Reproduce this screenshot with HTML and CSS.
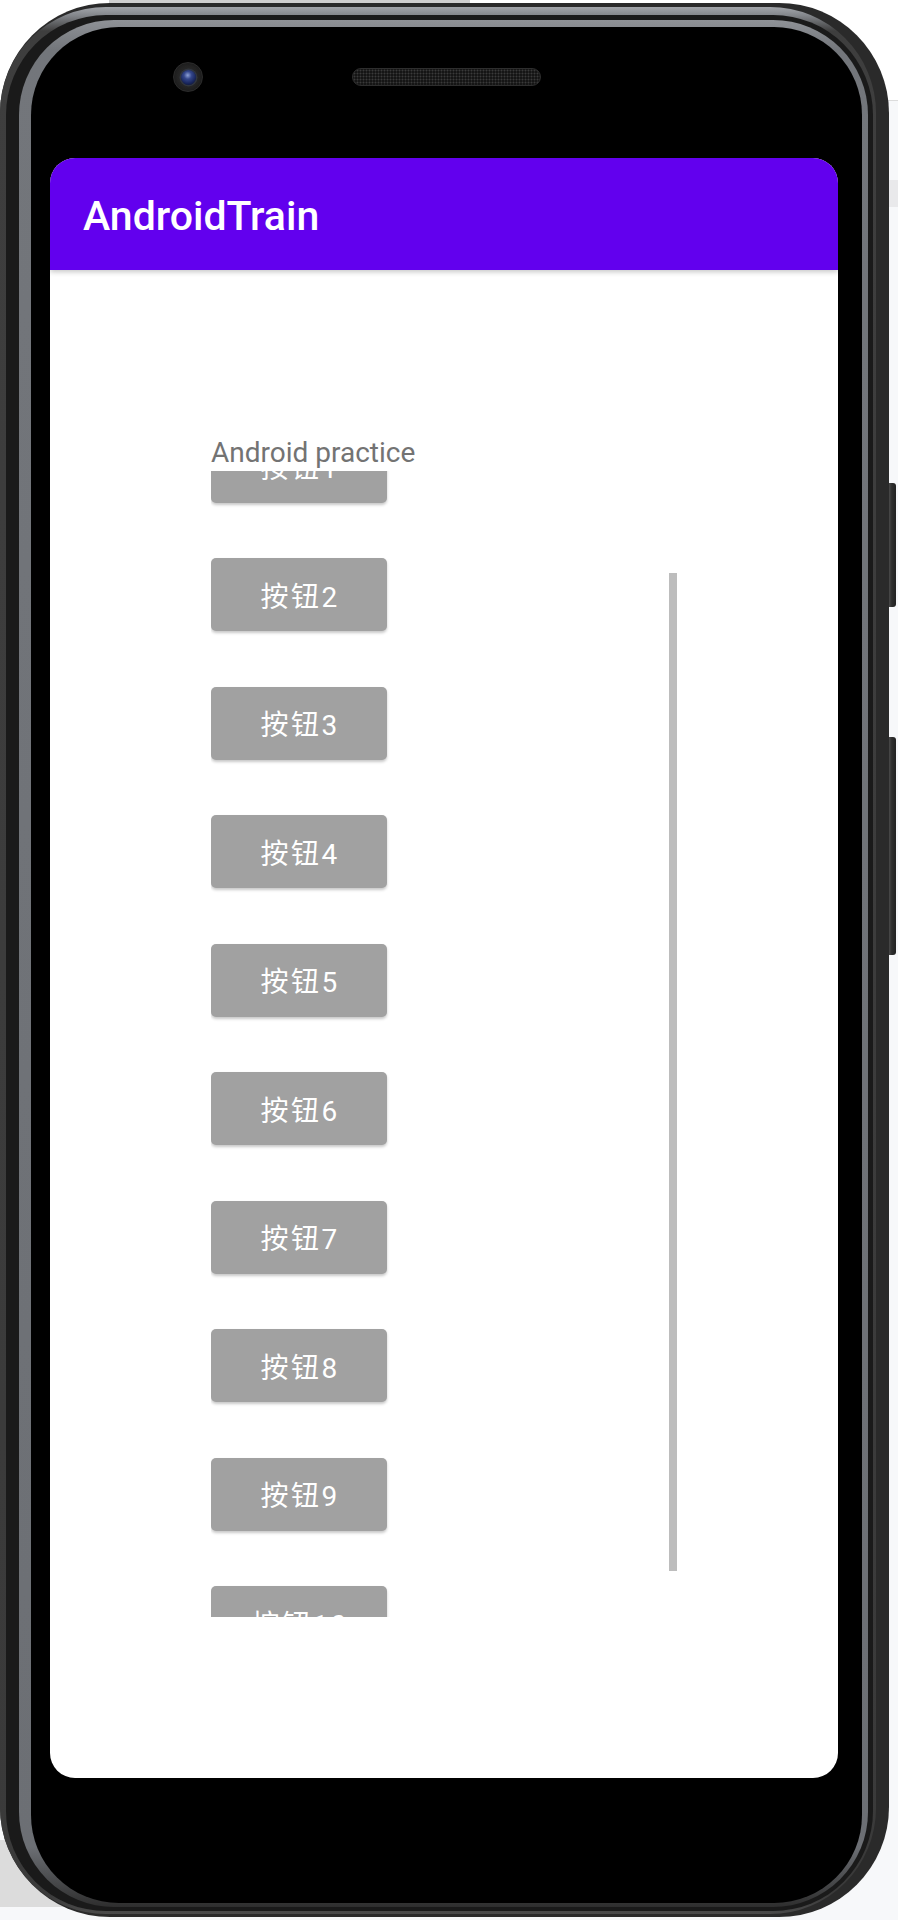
FILE: index.html
```html
<!DOCTYPE html>
<html lang="zh">
<head>
<meta charset="utf-8">
<title>AndroidTrain</title>
<link rel="stylesheet" href="styles.css">
</head>
<body>
<div class="device">
  <div class="phone">
    <div class="ring-gloss">
      <div class="ring-dark">
        <div class="ring-gray">
          <div class="bezel">
            <div class="bezel-top">
              <div class="camera"><div class="lens"></div></div>
              <div class="speaker"></div>
            </div>
            <div class="screen">
              <div class="appbar"><span class="appbar-title">AndroidTrain</span></div>
              <div class="content">
                <div class="label">Android practice</div>
                <div class="scroll">
                  <div class="list">
                    <div class="btn">按钮1</div>
                    <div class="btn">按钮2</div>
                    <div class="btn">按钮3</div>
                    <div class="btn">按钮4</div>
                    <div class="btn">按钮5</div>
                    <div class="btn">按钮6</div>
                    <div class="btn">按钮7</div>
                    <div class="btn">按钮8</div>
                    <div class="btn">按钮9</div>
                    <div class="btn">按钮10</div>
                  </div>
                  <div class="scrollbar"></div>
                </div>
              </div>
            </div>
          </div>
        </div>
      </div>
    </div>
  </div>
  <div class="side">
    <div class="side-btn power"></div>
    <div class="side-btn volume"></div>
  </div>
</div>
</body>
</html>
```

FILE: styles.css
```css
html, body {
  margin: 0;
  padding: 0;
  width: 898px;
  height: 1920px;
  overflow: hidden;
}

body {
  font-family: Roboto, "Noto Sans CJK SC", sans-serif;
  background:
    linear-gradient(#cfcfcf, #cfcfcf) 109px 0 / 361px 3px no-repeat,
    linear-gradient(#ffffff, #ffffff) 0 0 / 100% 100px no-repeat,
    linear-gradient(#dcdcdc, #dcdcdc) 0 100px / 100% 1px no-repeat,
    linear-gradient(#e9e9eb, #e9e9eb) 0 180px / 100% 27px no-repeat,
    linear-gradient(#dcdcdc, #dcdcdc) 0 1840px / 450px 67px no-repeat,
    #f7f8fa;
}

.device {
  display: flex;
  margin-top: 3px;
}

.phone {
  width: 889px;
  height: 1914px;
  box-sizing: border-box;
  border-radius: 110px;
  background: #2a2a2a;
  padding: 4px 13px 3px 0;
  display: flex;
}

.ring-gloss {
  flex: 1;
  display: flex;
  border-radius: 106px;
  padding: 8px 3px 3px 6px;
  background: linear-gradient(#a2a5aa 0, #85888d 8px, #3e3e3e 24px, #3a3a3a calc(100% - 20px), #4a4a4a 100%);
}

.ring-dark {
  flex: 1;
  display: flex;
  border-radius: 100px;
  padding: 5px 5px 4px 13px;
  background: #1a1a1a;
}

.ring-gray {
  flex: 1;
  display: flex;
  border-radius: 95px;
  padding: 7px 6px 4px 12px;
  background: linear-gradient(#8f9297 0, #73767b 30px, #6c6f74 calc(100% - 60px), #2e2e2e 100%);
}

.bezel {
  flex: 1;
  display: flex;
  flex-direction: column;
  border-radius: 88px;
  background: #000;
  padding: 0 24.4px 0 19.4px;
}

.bezel-top {
  height: 131px;
  box-sizing: border-box;
  padding-top: 35.3px;
  display: flex;
  align-items: flex-start;
  flex-shrink: 0;
}

.camera {
  width: 30px;
  height: 30px;
  box-sizing: border-box;
  border-radius: 50%;
  margin-left: 122.9px;
  border: 1px solid #2c2c2c;
  background: radial-gradient(circle, #333333 0, #232323 55%, #121212 100%);
  display: flex;
  align-items: center;
  justify-content: center;
  flex-shrink: 0;
}

.lens {
  width: 15px;
  height: 15px;
  border-radius: 50%;
  background: radial-gradient(circle at 45% 35%, #8ea1d6 0, #34468a 30%, #17245a 65%, #0a0f26 100%);
  box-shadow: 0 0 0 1.5px #30353f;
}

.speaker {
  width: 189px;
  height: 17.7px;
  box-sizing: border-box;
  margin-left: 148.4px;
  margin-top: 6px;
  border-radius: 9px;
  border: 1px solid #2e2e2e;
  background:
    radial-gradient(circle, #3a3a3a 0.7px, transparent 1.2px) 0 0 / 3px 3px,
    #151515;
  flex-shrink: 0;
}

.screen {
  height: 1619.5px;
  flex-shrink: 0;
  border-radius: 25px;
  background: #ffffff;
  overflow: hidden;
  display: flex;
  flex-direction: column;
}

.appbar {
  height: 112px;
  flex-shrink: 0;
  box-sizing: border-box;
  background: #6200ee;
  padding: 4px 0 0 32.6px;
  display: flex;
  align-items: center;
  box-shadow: 0 2px 5px rgba(0, 0, 0, 0.22);
  position: relative;
  z-index: 1;
}

.appbar-title {
  color: #ffffff;
  font-family: Roboto, sans-serif;
  font-weight: 500;
  font-size: 41px;
  line-height: 1.172;
}

.content {
  padding-left: 160.6px;
  display: flex;
  flex-direction: column;
}

.label {
  margin-top: 165.6px;
  font-family: Roboto, sans-serif;
  font-size: 28px;
  line-height: 33px;
  color: #737373;
}

.scroll {
  margin-top: 2.4px;
  width: 466px;
  height: 1146px;
  overflow: hidden;
  position: relative;
}

.list {
  margin-top: -41px;
  display: flex;
  flex-direction: column;
  gap: 55.5px;
}

.btn {
  width: 176px;
  height: 73px;
  flex-shrink: 0;
  border-radius: 5px;
  background: #a1a1a1;
  color: #ffffff;
  font-family: Roboto, "Noto Sans CJK SC", sans-serif;
  font-size: 28px;
  letter-spacing: 2.5px;
  padding-left: 2.5px;
  box-sizing: border-box;
  display: flex;
  align-items: center;
  justify-content: center;
  box-shadow: 0 2px 3px rgba(0, 0, 0, 0.22);
}

.scrollbar {
  position: absolute;
  right: 0;
  top: 101.7px;
  width: 8px;
  height: 998px;
  background: #bdbdbd;
}

.side {
  display: flex;
  flex-direction: column;
  width: 8px;
}

.side-btn {
  width: 7.4px;
  border-radius: 0 3px 3px 0;
  background: linear-gradient(to right, #4a4a4a, #2e2e2e 40%, #222222);
}

.power {
  margin-top: 480px;
  height: 124px;
}

.volume {
  margin-top: 130px;
  height: 218px;
}
```
